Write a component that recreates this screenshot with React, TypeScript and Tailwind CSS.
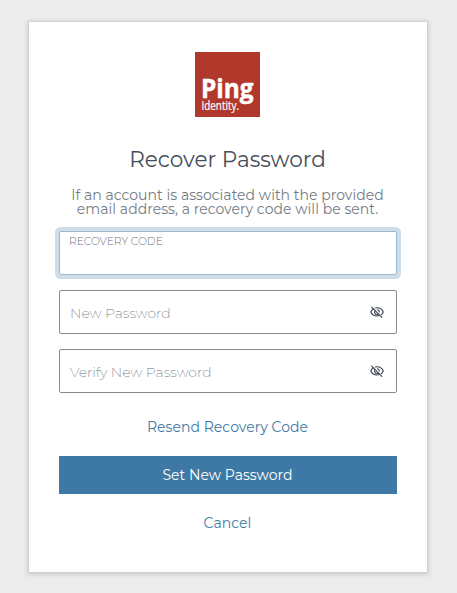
import type { ReactNode } from "react";

function EyeOff() {
  return (
    <svg width="14" height="12" viewBox="0 0 14 12" fill="none" stroke="#3b4552" strokeWidth="1.1" strokeLinecap="round">
      <path d="M3.600 2.700C2.200 3.500 1.300 4.600.8 6c1 2.400 3.400 4 6.300 4 .8 0 1.600-.1 2.300-.4M5.400 2c.5-.1 1.100-.2 1.700-.2 2.800 0 5.200 1.700 6.200 4.200-.4 1.100-1.100 2-2 2.700" />
      <path d="M4.900 4.800a2.400 2.400 0 0 0 3.300 3.300M7.300 3.700a2.400 2.400 0 0 1 2.100 2.200" />
      <path d="M1.700 1.200 11.800 11.400" />
    </svg>
  );
}

function PasswordField({ children }: { children: ReactNode }) {
  return (
    <div className="flex h-11 items-center justify-between rounded-[2px] border border-[#858992] pr-[12px] pl-[10px]">
      <span className="pt-[2px] text-[14px] whitespace-nowrap font-extralight text-[#68717c]">{children}</span>
      <EyeOff />
    </div>
  );
}

function Logo() {
  return (
    <svg width="65" height="65" viewBox="0 0 65 65" className="shrink-0">
      <rect width="65" height="65" fill="#b1392b" />
      <text x="6" y="46" fontFamily="Open Sans, sans-serif" fontWeight="700" fontSize="27.500" fill="#fff" stroke="#fff" strokeWidth="0.500" textLength="52.500" lengthAdjust="spacingAndGlyphs">Ping</text>
      <text x="6.500" y="58" fontFamily="Open Sans, sans-serif" fontSize="12" fill="#fff" stroke="#fff" strokeWidth="0.200" textLength="37.500" lengthAdjust="spacingAndGlyphs">Identity.</text>
    </svg>
  );
}

export default function App() {
  return (
    <main className="flex h-[593px] w-[457px] justify-center bg-[#ececec] pt-[22px] font-['Montserrat','Inter',sans-serif]">
      <section className="mr-px flex h-[550px] w-[398px] flex-col bg-white px-[30px] pt-[30px] shadow-[0_0_0_1px_#d2d2d2,0_1px_5px_1px_rgba(0,0,0,0.18)]">
        <div className="mr-[2px] flex justify-center"><Logo /></div>
        <h1 className="mt-[28px] mr-px text-center text-[21.600px] leading-[28px] font-normal whitespace-nowrap text-[#464e5a]">Recover Password</h1>
        <p className="mt-[15px] mr-px text-center text-[14px] leading-[14px] font-normal tracking-[0.04px] whitespace-nowrap text-[#747b83]">
          If an account is associated with the provided<br />email address, a recovery code will be sent.
        </p>
        <div className="mt-[15px] h-11 rounded-[2px] border border-[#98b9d0] pt-[4px] pl-[9px] shadow-[0_0_0_4px_#cfdde8]">
          <div className="text-[10.650px] leading-[12px] font-light whitespace-nowrap text-[#68717c]">RECOVERY CODE</div>
        </div>
        <div className="mt-[15px] flex flex-col gap-[15px]">
          <PasswordField>New Password</PasswordField>
          <PasswordField>Verify New Password</PasswordField>
        </div>
        <a className="mt-[24px] mr-px text-center text-[14px] leading-5 tracking-[0.04px] text-[#3e79a5]">Resend Recovery Code</a>
        <button className="mt-[19px] h-[38px] w-full shrink-0 bg-[#3e79a5] pr-px text-[14px] tracking-[0.04px] text-white">Set New Password</button>
        <a className="mt-[19px] mr-px text-center text-[14px] leading-5 tracking-[0.04px] text-[#3e79a5]">Cancel</a>
      </section>
    </main>
  );
}
